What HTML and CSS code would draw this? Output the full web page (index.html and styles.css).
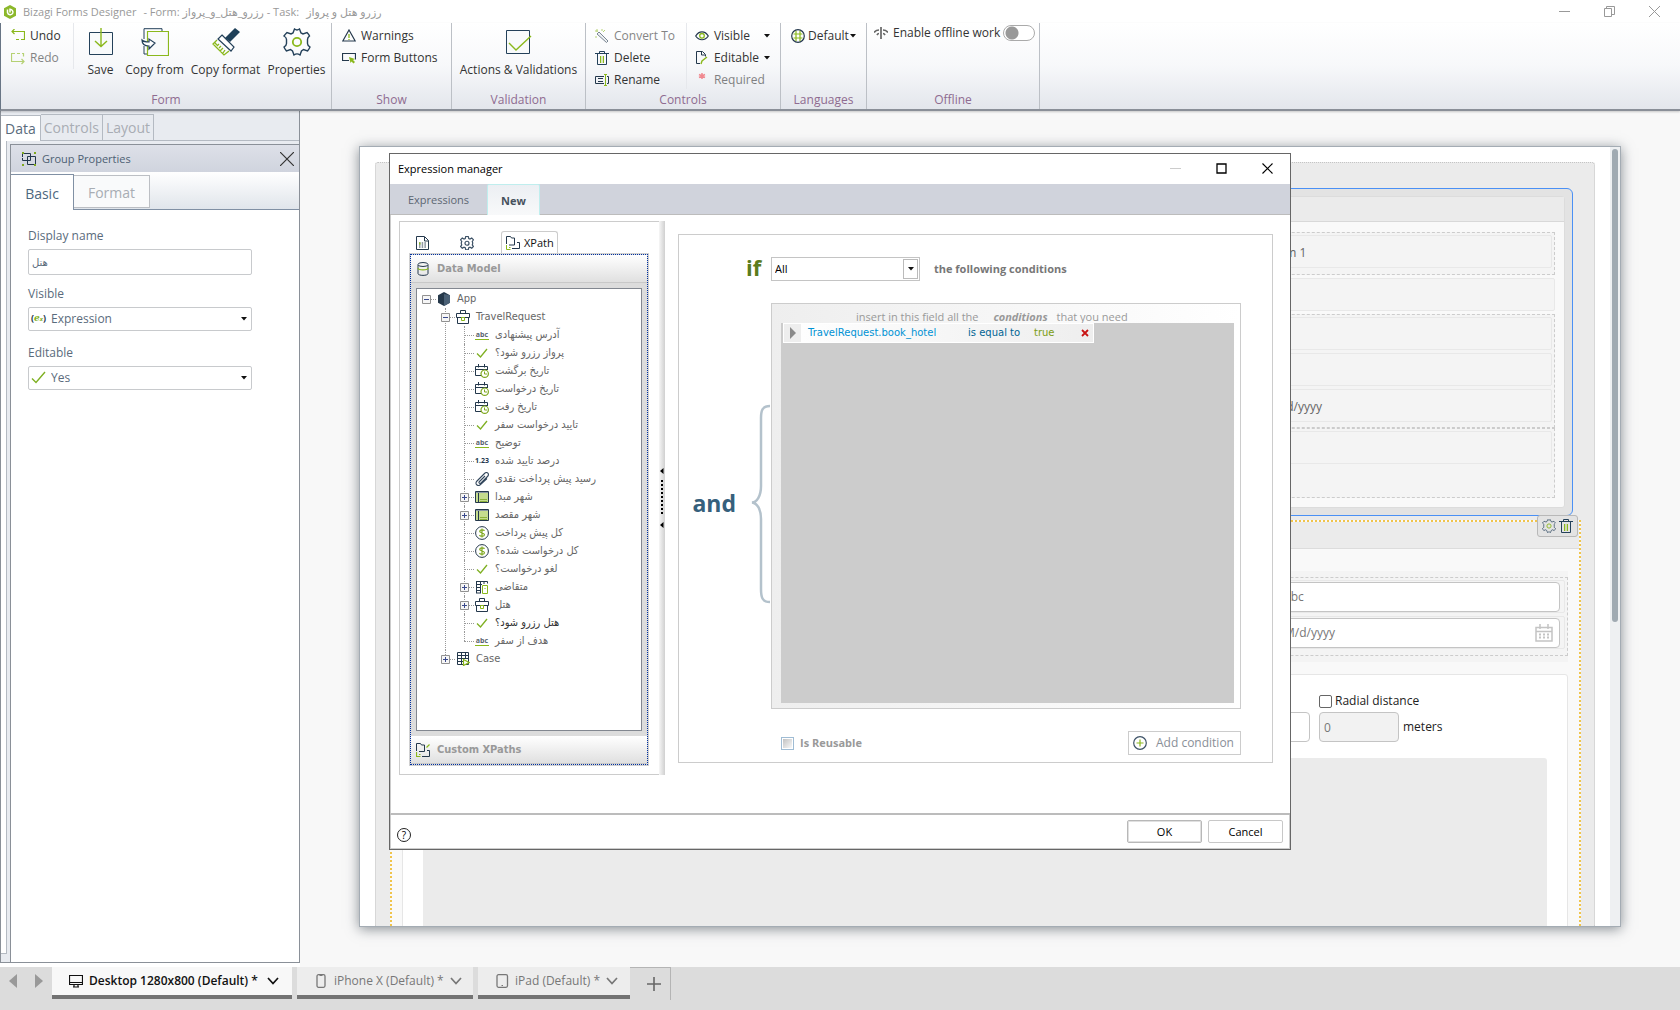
FILE: index.html
```html
<!DOCTYPE html>
<html lang="en">
<head>
<meta charset="utf-8">
<title>Bizagi Forms Designer</title>
<link rel="stylesheet" href="styles.css">
</head>
<body>
<svg class="sprite" aria-hidden="true">
  <symbol id="gear" viewBox="0 0 28 28"><path d="M11.500 1c2 1.500 3 1.500 5 0l1.500 4 2 1 4-1.500c0 0 2 2 2.500 3.500-2 1.500-2 2.500-2 3.500v4c0 1 0 2 2.500 3.500-.5 1.500-2.500 4-2.500 4l-4-1.500-2 1.500-1.500 4c-2-1.500-4-1.500-6 0l-1.500-4-2-1.500-4 1.500s-2-2.500-2.500-4c2.500-1.500 2.500-2.500 2.500-3.500v-4c0-1 0-2-2.500-3.500C2 6.500 4 4.500 4 4.500L8 6l2-1z" fill="none" stroke="#24415a" stroke-width="1.400"/><circle cx="14" cy="14" r="4.200" fill="none" stroke="#8ab81c" stroke-width="1.800"/></symbol>
  <symbol id="gear-dark" viewBox="0 0 28 28"><path d="M11.500 1h5l1 4 2.500 1.200L23.500 4 27 7.500l-2.500 3.500.8 2v3l-.8 2 2.500 3-3.500 3.500-3.500-2-2.500 1-1 4h-5l-1-4-2.500-1-3.500 2L1 21l2.500-3-.8-2v-3l.8-2L1 7.500 4.500 4 8 6.200 10.500 5z" fill="none" stroke="#3d5266" stroke-width="2.400"/><circle cx="14" cy="14.500" r="4" fill="none" stroke="#3d5266" stroke-width="2.400"/></symbol>
  <symbol id="trash" viewBox="0 0 14 14"><path d="M0 2.500h14M4.500 2V.5h5V2M2.500 3v10.500h9V3" fill="none" stroke="#24415a"/><path d="M5.500 5v7M8.500 5v7" stroke="#8ab81c"/><path d="M7 5v7" stroke="#8ab81c" opacity=".5"/></symbol>
  <symbol id="check" viewBox="0 0 14 14"><path d="M2 7.500l3.500 3.500L12 3" fill="none" stroke="#7fb022" stroke-width="1.300"/></symbol>
  <symbol id="date" viewBox="0 0 14 14"><path d="M6 11.500H.5v-9h12v3M1 5.500h12M3.500 0v3.500M9.500 0v3.500" fill="none" stroke="#24384c"/><circle cx="9.700" cy="9.700" r="3.700" fill="#fff" stroke="#7fa81f" stroke-width="1.200"/><path d="M9.500 7.500V10H12" fill="none" stroke="#7fa81f"/></symbol>
  <symbol id="clip" viewBox="0 0 14 14"><path d="M10 4L4.500 9.500c-1.300 1.300.2 2.800 1.500 1.500L12.500 4.500C15 2 12 -.8 9.500 1.500L2 9c-2.800 2.800.8 6 3.500 3.500L12 6.500" fill="none" stroke="#33475c" stroke-width="1.100"/></symbol>
  <symbol id="param" viewBox="0 0 14 14"><path d="M.5 1.500h13v11H.5z" fill="#c5dc8e" stroke="#24384c"/><path d="M1 2.500h12" stroke="#8b98a3"/><path d="M3.500 3v9" stroke="#24384c"/><path d="M5 9.500h7M5 11.500h7" stroke="#8cb13b"/></symbol>
  <symbol id="money" viewBox="0 0 14 14"><circle cx="7" cy="7" r="6.400" fill="none" stroke="#24384c"/><path d="M9.500 4.800C9 3.500 5 3.300 4.700 5.200 4.500 7 9.500 6.500 9.500 8.800 9.400 10.800 5 10.700 4.500 9M7 2.500v9" fill="none" stroke="#7fa81f" stroke-width="1.200"/></symbol>
  <symbol id="case-bag" viewBox="0 0 14 14"><path d="M.5 3.500h13v4H.5zM1.500 7.500v6h11v-6M4.500 3V.5h5V3" fill="#fff" stroke="#24384c"/><path d="M5.500 7.500h3v3h-3z" fill="#fff" stroke="#8ab81c"/></symbol>
  <symbol id="user-tbl" viewBox="0 0 14 14"><path d="M1.500 1v12M1 1.500h11.500v2M1 4.500h6M1 7.500h5M1 10.500h5M1 13h5M5.500 1v12M9 1v3" fill="none" stroke="#24384c"/><path d="M7.500 5.500h5v8h-5zM10 8v1" fill="#fff" stroke="#8ab81c"/></symbol>
  <symbol id="case-tbl" viewBox="0 0 14 14"><path d="M1.500.5h11v12h-11zM1 3.500h11M1 6.500h11M1 9.500h6M5.500 1v11M9.500 1v6" fill="none" stroke="#24384c"/><path d="M7.500 7.500l5.500 3-5.500 3z" fill="#fff" stroke="#8ab81c" stroke-width="1.200"/></symbol>
  <symbol id="cube" viewBox="0 0 14 14"><path d="M7 0l6 3.300v7.400L7 14l-6-3.300V3.300z" fill="#25384a"/><path d="M7 2l6 1.300v7.400L7 14z" fill="#4a6075"/></symbol>
  <symbol id="xpath" viewBox="0 0 14 14"><path d="M.5 8V.5h4l1 1.500h3v7H3M6 12.500h7.500v-6H11" fill="none" stroke="#24384c"/><path d="M.5 9v4.500h4M3 11.500h1.500" fill="none" stroke="#8ab81c"/></symbol>
  <symbol id="plus-box" viewBox="0 0 9 9"><path d="M.5.5h8v8h-8z" fill="#f6f6f6" stroke="#919191"/><path d="M2 4.500h5M4.500 2v5" stroke="#3a4a8c"/></symbol>
  <symbol id="minus-box" viewBox="0 0 9 9"><path d="M.5.5h8v8h-8z" fill="#f6f6f6" stroke="#919191"/><path d="M2 4.500h5" stroke="#3a4a8c"/></symbol>
  <symbol id="chev" viewBox="0 0 12 8"><path d="M1 1l5 5.500L11 1" fill="none" stroke="currentColor" stroke-width="1.700"/></symbol>
  <symbol id="caret" viewBox="0 0 6 4"><path d="M0 0h6L3 3.500z" fill="#111"/></symbol>
</svg>

<header class="titlebar">
  <svg class="logo" viewBox="0 0 14 14"><path d="M7 0l6 3.300v7.400L7 14l-6-3.300V3.300z" fill="#8cb82b"/><path d="M4.500 4.500v3A2.800 2.800 0 0 0 9.800 8 3 3 0 0 0 7 4.200V7.500" fill="none" stroke="#fff" stroke-width="1.500"/></svg>
  <h1 class="app-title"><span>Bizagi Forms Designer</span><span>- Form: رزرو_هتل_و_پرواز - Task:</span><span>رزرو هتل و پرواز</span></h1>
  <div class="win-buttons">
    <button aria-label="Minimize"><svg viewBox="0 0 11 11"><path d="M0 5.500h11" stroke="#999"/></svg></button>
    <button aria-label="Restore"><svg viewBox="0 0 11 11"><path d="M.5 2.500h7v8h-7zM2.500 2V.5h8v8H8" fill="none" stroke="#999"/></svg></button>
    <button aria-label="Close"><svg viewBox="0 0 11 11"><path d="M0 0l11 11M11 0L0 11" stroke="#999"/></svg></button>
  </div>
</header>

<nav class="ribbon" aria-label="Ribbon">
  <section class="group g-form">
    <div class="group-body">
      <div class="stack undo">
        <button class="small"><svg viewBox="0 0 14 14"><path d="M3.500 0L1 2.500 3.500 5M1 2.500h12.500v8H10M8 10.500H5" fill="none" stroke="#8ab81c" stroke-width="1.200"/></svg>Undo</button>
        <button class="small off"><svg viewBox="0 0 14 14"><path d="M4 2.500H.5v8H13M10.500 8l2.500 2.500-2.500 2.500M6 2.500h3M11 2.500h1.500v3" fill="none" stroke="#8ab81c" stroke-width="1.200"/></svg>Redo</button>
      </div>
      <button class="big save"><svg viewBox="0 0 28 28"><path d="M2.500 4.500h23v22h-23z" fill="#f8fafb" stroke="#24415a"/><path d="M14 0v18M8 13l6 5.500 6-5.500" fill="none" stroke="#8ab81c" stroke-width="1.400"/></svg>Save</button>
      <button class="big from"><svg viewBox="0 0 28 28"><path d="M3 11V.7h18V4M3 18v8h3" fill="none" stroke="#24415a"/><path d="M6.500 3.500h21v24h-21z" fill="#f8fafb" stroke="#8ab81c" stroke-width="1.200"/><path d="M1 12c0 4 2 6 7 6v3l6-6-6-4v3c-3 0-5 0-7-2z" fill="#fff" stroke="#24415a" stroke-width="1.200"/></svg>Copy from</button>
      <button class="big format"><svg viewBox="0 0 28 28"><path d="M23 0l5 4-10 10-5-4z" fill="#1f4059"/><path d="M10 7l12 12-3 4L6 11z" fill="#fff" stroke="#24415a" stroke-width="1.200"/><path d="M5 12L1 16l11 11 5-4M3 15l2 2M5 18l2-2M7 20l2-2M8 23l3-3M11 25l2-3" fill="none" stroke="#8ab81c" stroke-width="1.300"/></svg>Copy format</button>
      <button class="big from"><svg><use href="#gear"/></svg>Properties</button>
    </div>
    <h2>Form</h2>
  </section>
  <section class="group g-show">
    <div class="group-body">
      <div class="stack">
        <button class="small"><svg viewBox="0 0 14 14"><path d="M7 1l6.200 11H.8z" fill="none" stroke="#24384c" stroke-width="1.200"/><path d="M7 5v4M7 10v1" stroke="#8ab81c" stroke-width="1.300"/></svg>Warnings</button>
        <button class="small"><svg viewBox="0 0 14 14"><path d="M7 9.500H.5v-7h13v6" fill="none" stroke="#24384c" stroke-width="1.200"/><path d="M7 6l6 2-2 1 2 2-1.500 1.500-2-2-1 1.500z" fill="#8ab81c"/></svg>Form Buttons</button>
      </div>
    </div>
    <h2>Show</h2>
  </section>
  <section class="group g-valid">
    <div class="group-body">
      <button class="big"><svg viewBox="0 0 28 28"><path d="M2.500 2.500h23v23h-23z" fill="#f8fafb" stroke="#24415a"/><path d="M5 15l7 7L27 8" fill="none" stroke="#8ab81c" stroke-width="1.400"/></svg>Actions &amp; Validations</button>
    </div>
    <h2>Validation</h2>
  </section>
  <section class="group g-controls">
    <div class="group-body">
      <div class="stack first">
        <button class="small off"><svg viewBox="0 0 14 14"><path d="M4 3l9 9-1.500 1.500L2 5z" fill="#e5e9ec" stroke="#24384c"/><path d="M2 0v3M0 2h3M7 0v2M8 3l2-2M1 7v2" stroke="#8ab81c"/></svg>Convert To</button>
        <button class="small"><svg><use href="#trash"/></svg>Delete</button>
        <button class="small"><svg viewBox="0 0 14 14"><path d="M9 3.500H.5v7H9M12 3.500h1.500v7H12M3 5.500h5M3 8.500h5" fill="none" stroke="#24384c"/><path d="M9 1.500h3M10.500 2v10M9 12.500h3" stroke="#8ab81c" fill="none"/></svg>Rename</button>
      </div>
      <div class="stack second">
        <button class="small"><svg viewBox="0 0 14 14"><path d="M.7 7C4 1.500 10 1.500 13.300 7 10 12 4 12 .7 7z" fill="none" stroke="#24384c" stroke-width="1.200"/><circle cx="7" cy="6.800" r="2.300" fill="none" stroke="#8ab81c" stroke-width="1.300"/></svg>Visible<svg class="caret"><use href="#caret"/></svg></button>
        <button class="small"><svg viewBox="0 0 14 14"><path d="M5 12.500H1.500V.5h6l3 3v2M6.500 1v3h3.500" fill="none" stroke="#24384c"/><path d="M6 13l1-3 5-4" fill="none" stroke="#8ab81c" stroke-width="1.400"/></svg>Editable<svg class="caret"><use href="#caret"/></svg></button>
        <button class="small off"><svg viewBox="0 0 14 14"><path d="M7 0v6M4 1.500l6 3M10 1.500l-6 3" stroke="#f0424b" stroke-width="1.500"/></svg>Required</button>
      </div>
    </div>
    <h2>Controls</h2>
  </section>
  <section class="group g-lang">
    <div class="group-body">
      <div class="stack">
        <button class="small"><svg viewBox="0 0 14 14"><circle cx="7" cy="7" r="6.300" fill="none" stroke="#24384c" stroke-width="1.200"/><path d="M5 2v10M9 2v10M2.500 5h9M2.500 9h9" stroke="#8ab81c" stroke-width="1.200"/></svg>Default<svg class="caret"><use href="#caret"/></svg></button>
      </div>
    </div>
    <h2>Languages</h2>
  </section>
  <section class="group g-off">
    <div class="group-body">
      <svg class="ico14" viewBox="0 0 14 14"><path d="M7 1v12M0 6.500c1.500-2 3-2.500 5-2.500M9 4c2 0 3.500.5 5 2.500M3 9c.5-1 1-1.500 2-1.500M9 7.500c1 0 1.500.5 2 1.500" fill="none" stroke="#666" stroke-width="1.700"/></svg>
      <label for="offline">Enable offline work</label>
      <input type="checkbox" id="offline" class="toggle">
    </div>
    <h2>Offline</h2>
  </section>
</nav>

<main class="workspace">
  <aside class="side">
    <div class="side-tabs">
      <button class="on">Data</button><button>Controls</button><button>Layout</button>
    </div>
    <div class="side-row">
      <div class="strip"></div>
      <section class="props">
        <header class="props-head">
          <svg class="ico14" viewBox="0 0 14 14"><path d="M.5 5V1.500h8v7h-8V6M5.500 4.500h8v8h-8z" fill="none" stroke="#24384c"/><path d="M0 0h2v2H0zM12 0h2v2h-2zM0 12h2v2H0zM12 12h2v2h-2z" fill="#7fa81f"/></svg>
          <h2>Group Properties</h2>
          <button aria-label="Close panel"><svg viewBox="0 0 14 14"><path d="M0 0l14 14M14 0L0 14" stroke="#333" stroke-width="1.200"/></svg></button>
        </header>
        <div class="props-tabs"><button class="on">Basic</button><button>Format</button></div>
        <form class="props-form">
          <label for="dname">Display name</label>
          <input id="dname" type="text" value="هتل">
          <label for="vis">Visible</label>
          <div class="pick"><span class="ex">(<b>e</b><i>x</i>)</span><select id="vis"><option>Expression</option></select><svg class="caret"><use href="#caret"/></svg></div>
          <label for="edi">Editable</label>
          <div class="pick"><svg class="tick" viewBox="0 0 15 15"><path d="M1 8.500L5 12.500 14 2" fill="none" stroke="#7fb022" stroke-width="1.400"/></svg><select id="edi"><option>Yes</option></select><svg class="caret"><use href="#caret"/></svg></div>
        </form>
      </section>
    </div>
  </aside>

  <section class="canvas">
    <div class="sheet">
      <div class="form-area">
        <section class="grp blue">
          <div class="inner">
            <div class="inner-head"></div>
            <div class="inner-body">
              <div class="dash"><div class="cell"><span>Item 1</span></div></div>
              <div class="cell wide"></div>
              <div class="dash many"><div class="cell"></div><div class="cell"></div><div class="cell"><span>M/d/yyyy</span></div></div>
              <div class="dash last"><div class="cell"></div></div>
            </div>
          </div>
        </section>
        <section class="grp yellow">
          <div class="badge"><button aria-label="Settings"><svg><use href="#gear"/></svg></button><button aria-label="Delete group"><svg><use href="#trash"/></svg></button></div>
          <div class="y-head"></div>
          <div class="y-body">
            <div class="band">
              <div class="dash2">
                <div class="cell"><input type="text" value="abc" aria-label="Hotel"></div>
                <div class="cell"><input type="text" value="M/d/yyyy" aria-label="Date"><svg class="cal" viewBox="0 0 18 18"><path d="M1 3.500h16v13.500H1zM1 7.500h16M5 0v5M13 0v5" fill="none" stroke="#c4c4c4" stroke-width="1.500"/><path d="M4 10.500h10M4 13.500h10" stroke="#c4c4c4" stroke-width="2" stroke-dasharray="2 2"/></svg></div>
              </div>
            </div>
            <div class="map-card">
              <div class="radial">
                <input class="near" type="text" aria-label="Address">
                <div class="radial-col">
                  <span class="radial-row"><input type="checkbox" id="rad"><label for="rad">Radial distance</label></span>
                  <span class="radial-row"><input class="dist" id="dist" type="text" value="0"><label for="dist">meters</label></span>
                </div>
              </div>
              <div class="map"></div>
            </div>
          </div>
        </section>
      </div>
      <div class="track"><div class="thumb"></div></div>
    </div>
  </section>
</main>

<footer class="devices">
  <svg class="nav" viewBox="0 0 8 14"><path d="M8 0v14L0 7z" fill="#999"/></svg>
  <svg class="nav" viewBox="0 0 8 14"><path d="M0 0v14l8-7z" fill="#999"/></svg>
  <button class="dev on d1"><svg class="ico14" viewBox="0 0 14 14"><path d="M.5 1.500h13v9H.5zM1 8.500h12M5 11v2h4v-2M4 13h6" fill="none" stroke="currentColor" stroke-width="1.200"/></svg><span>Desktop 1280x800 (Default) *</span><svg class="chev"><use href="#chev"/></svg></button>
  <button class="dev d2"><svg class="ico14" viewBox="0 0 14 14"><rect x="3" y=".7" width="8" height="12.600" rx="1.500" fill="none" stroke="currentColor" stroke-width="1.300"/><path d="M5.500 1.500h3" stroke="currentColor"/></svg><span>iPhone X (Default) *</span><svg class="chev"><use href="#chev"/></svg></button>
  <button class="dev d3"><svg class="ico14" viewBox="0 0 14 14"><rect x="2" y=".7" width="10.500" height="12.600" rx="1.500" fill="none" stroke="currentColor" stroke-width="1.300"/><path d="M6.500 11.500h1.500" stroke="currentColor"/></svg><span>iPad (Default) *</span><svg class="chev"><use href="#chev"/></svg></button>
  <button class="add" aria-label="Add device"><svg class="ico14" viewBox="0 0 14 14"><path d="M7 0v14M0 7h14" stroke="#666" stroke-width="1.600"/></svg></button>
</footer>

<section class="dialog" role="dialog" aria-label="Expression manager">
  <header class="dlg-title">
    <h2>Expression manager</h2>
    <button aria-label="Minimize"><svg viewBox="0 0 11 11"><path d="M0 5.500h11" stroke="#ccc"/></svg></button>
    <button aria-label="Maximize"><svg viewBox="0 0 11 11"><path d="M1 1h9v9H1z" fill="none" stroke="#000" stroke-width="1.300"/></svg></button>
    <button aria-label="Close"><svg viewBox="0 0 11 11"><path d="M.5.5l10 10M10.500.5l-10 10" stroke="#000" stroke-width="1.100"/></svg></button>
  </header>
  <div class="dlg-tabs"><button>Expressions</button><button class="on">New</button></div>
  <div class="dlg-body">
    <div class="left-box">
      <div class="icon-tabs">
        <button aria-label="Functions"><svg class="ico14" viewBox="0 0 14 14"><path d="M1.500.5h8l4 4v9h-12zM9.500 1v4h4" fill="none" stroke="#24384c"/><path d="M4 7h8M4 9h8M4 11h8" stroke="#24384c" stroke-dasharray="1.500 1.200"/><path d="M4 6.500h1.500v2H4z" fill="#8ab81c"/></svg></button>
        <button aria-label="Settings"><svg class="ico14"><use href="#gear-dark"/></svg></button>
        <button class="on"><svg class="ico14"><use href="#xpath"/></svg>XPath</button>
      </div>
      <div class="accordion">
        <button class="acc-head"><svg class="ico14" viewBox="0 0 14 14"><path d="M2 3v8.500c0 2.500 10 2.500 10 0V3" fill="none" stroke="#24384c"/><ellipse cx="7" cy="2.500" rx="5" ry="2" fill="none" stroke="#24384c"/><path d="M2 6c0 2.500 10 2.500 10 0" fill="none" stroke="#8ab81c" stroke-width="1.200"/></svg>Data Model</button>
        <div class="tree">
          <ul class="root">
            <li><div class="node"><button aria-label="Collapse"><svg><use href="#minus-box"/></svg></button><svg class="ico14"><use href="#cube"/></svg>App</div>
              <ul>
                <li><div class="node"><button aria-label="Collapse"><svg><use href="#minus-box"/></svg></button><svg class="ico14"><use href="#case-bag"/></svg>TravelRequest</div>
                  <ul>
                    <li><div class="node leaf"><span class="abc">abc</span>آدرس پیشنهادی</div></li>
                    <li><div class="node leaf"><svg class="ico14"><use href="#check"/></svg>پرواز رزرو شود؟</div></li>
                    <li><div class="node leaf"><svg class="ico14"><use href="#date"/></svg>تاریخ برگشت</div></li>
                    <li><div class="node leaf"><svg class="ico14"><use href="#date"/></svg>تاریخ درخواست</div></li>
                    <li><div class="node leaf"><svg class="ico14"><use href="#date"/></svg>تاریخ رفت</div></li>
                    <li><div class="node leaf"><svg class="ico14"><use href="#check"/></svg>تایید درخواست سفر</div></li>
                    <li><div class="node leaf"><span class="abc">abc</span>توضیح</div></li>
                    <li><div class="node leaf"><span class="abc num">1.23</span>درصد تایید شده</div></li>
                    <li><div class="node leaf"><svg class="ico14"><use href="#clip"/></svg>رسید پیش پرداخت نقدی</div></li>
                    <li><div class="node"><button aria-label="Expand"><svg><use href="#plus-box"/></svg></button><svg class="ico14"><use href="#param"/></svg>شهر مبدا</div></li>
                    <li><div class="node"><button aria-label="Expand"><svg><use href="#plus-box"/></svg></button><svg class="ico14"><use href="#param"/></svg>شهر مقصد</div></li>
                    <li><div class="node leaf"><svg class="ico14"><use href="#money"/></svg>کل پیش پرداخت</div></li>
                    <li><div class="node leaf"><svg class="ico14"><use href="#money"/></svg>کل درخواست شده؟</div></li>
                    <li><div class="node leaf"><svg class="ico14"><use href="#check"/></svg>لغو درخواست؟</div></li>
                    <li><div class="node"><button aria-label="Expand"><svg><use href="#plus-box"/></svg></button><svg class="ico14"><use href="#user-tbl"/></svg>متقاضی</div></li>
                    <li><div class="node"><button aria-label="Expand"><svg><use href="#plus-box"/></svg></button><svg class="ico14"><use href="#case-bag"/></svg>هتل</div></li>
                    <li><div class="node leaf picked"><svg class="ico14"><use href="#check"/></svg>هتل رزرو شود؟</div></li>
                    <li><div class="node leaf"><span class="abc">abc</span>هدف از سفر</div></li>
                  </ul>
                </li>
                <li><div class="node"><button aria-label="Expand"><svg><use href="#plus-box"/></svg></button><svg class="ico14"><use href="#case-tbl"/></svg>Case</div></li>
              </ul>
            </li>
          </ul>
        </div>
        <button class="acc-head"><svg class="ico14" viewBox="0 0 14 14"><path d="M.5 8V.5h4l1 1.500h3v6.500H3M6 13.500h7.500v-6H11" fill="none" stroke="#24384c"/><path d="M.5 9v4.500h4M3 11.500h1.500M10.500 4.500l3-3" fill="none" stroke="#8ab81c" stroke-width="1.200"/></svg>Custom XPaths</button>
      </div>
    </div>
    <div class="splitter"><svg viewBox="0 0 6 60"><path d="M4.500 0v6L1 3zM4.500 54v6L1 57z" fill="#000"/><path d="M3 12v36" stroke="#000" stroke-width="2" stroke-dasharray="2 2"/></svg></div>
    <div class="rule">
      <div class="if-row">
        <span class="if">if</span>
        <div class="match"><select aria-label="Match"><option>All</option></select><span class="arrow"><svg class="caret"><use href="#caret"/></svg></span></div>
        <strong>the following conditions</strong>
      </div>
      <div class="and">
        <span>and</span>
        <svg viewBox="0 0 20 200"><path d="M20 2C12 2 11 7 11 14V82c0 10-4 16-9 16.500 5 .5 9 6.500 9 16.500v70c0 8 1 13 9 13" fill="none" stroke="#b4c2cc" stroke-width="2.500"/></svg>
      </div>
      <div class="conds">
        <p>insert in this field all the <b>conditions</b> that you need</p>
        <div class="cond-list">
          <div class="cond">
            <span class="play"><svg viewBox="0 0 6 12"><path d="M0 0v12l6-6z" fill="#8a8a8a"/></svg></span>
            <a href="#field">TravelRequest.book_hotel</a><a class="op" href="#op">is equal to</a><a class="val" href="#val">true</a>
            <button aria-label="Remove"><svg viewBox="0 0 8 8"><path d="M1 1l6 6M7 1L1 7" stroke="#c81414" stroke-width="1.800"/></svg></button>
          </div>
        </div>
      </div>
      <div class="rule-foot">
        <input type="checkbox" id="reuse"><label for="reuse">Is Reusable</label>
        <button class="add-cond"><svg class="ico14" viewBox="0 0 14 14"><circle cx="7" cy="7" r="6.300" fill="none" stroke="#3d5266" stroke-width="1.200"/><path d="M7 3.500v7M3.500 7h7" stroke="#8ab81c" stroke-width="1.200"/></svg>Add condition</button>
      </div>
    </div>
  </div>
  <footer class="dlg-foot">
    <button class="help" aria-label="Help">?</button>
    <button class="ok">OK</button><button>Cancel</button>
  </footer>
</section>
</body>
</html>
```
FILE: styles.css
```css
* { box-sizing: border-box; }
body {
  margin: 0; height: 100vh; display: flex; flex-direction: column; overflow: hidden; position: relative;
  font: 12px/16px "Open Sans", "DejaVu Sans", sans-serif; color: #333; background: #fff;
}
h1, h2, p, ul { margin: 0; padding: 0; font: inherit; list-style: none; }
button, input, select { font: inherit; color: inherit; background: none; border: 0; padding: 0; margin: 0; border-radius: 0; }
select { appearance: none; }
svg { display: block; flex: none; }
.sprite { position: absolute; width: 0; height: 0; }
.ico14 { width: 14px; height: 14px; }
.caret { width: 6px; height: 4px; }

/* title bar */
.titlebar { height: 23px; display: flex; align-items: center; padding-left: 3px; flex: none; color: #999; }
.logo { width: 14px; height: 14px; margin-right: 6px; }
.app-title { flex: 1; display: flex; gap: 7px; font-size: 11px; }
.win-buttons { display: flex; padding-right: 3px; }
.win-buttons button { width: 45px; height: 20px; display: grid; place-items: center; }
.win-buttons svg { width: 11px; height: 11px; }

/* ribbon */
.ribbon { height: 88px; flex: none; display: flex; border-left: 1px solid #687585; border-bottom: 2px solid #8a8f98; background: linear-gradient(#fff, #f7f8fa 50%, #e3e6ec); box-shadow: 0 1px 2px rgba(0, 0, 0, .2); position: relative; }
.group { display: flex; flex-direction: column; border-right: 1px solid #bcc0c6; }
.group h2 { text-align: center; color: #8f6b90; height: 17px; flex: none; }
.group-body { flex: 1; display: flex; align-items: flex-start; min-height: 0; }
.g-form { width: 331px; }
.g-show { width: 120px; }
.g-valid { width: 134px; }
.g-controls { width: 195px; }
.g-lang { width: 86px; }
.g-off { width: 173px; }
.stack { display: flex; flex-direction: column; gap: 6px; padding: 5px 0 0 10px; }
.small { height: 16px; display: flex; align-items: center; gap: 5px; white-space: nowrap; }
.small svg:not(.caret) { width: 14px; height: 14px; }
.off { opacity: .6; }
.undo { width: 73px; height: 46px; border-right: 1px solid #e6e8ec; flex: none; }
.big { display: flex; flex-direction: column; align-items: center; gap: 6px; padding-top: 5px; white-space: nowrap; flex: none; }
.big svg { width: 28px; height: 28px; }
.save { width: 53px; }
.from { width: 55px; }
.format { width: 87px; }
.g-valid .group-body { justify-content: center; }
.stack.first { width: 101px; border-right: 1px solid #e6e8ec; height: 66px; padding-left: 9px; }
.stack.second { flex: 1; padding-left: 8px; }
.second .caret { margin-left: auto; }
.second .small { padding-right: 10px; }
.g-lang .small { gap: 3px; }
.g-lang .caret { margin-left: -2px; }
.g-off .group-body { padding: 1px 0 0 7px; gap: 5px; align-items: center; flex: none; height: 18px; white-space: nowrap; }
.g-off h2 { margin-top: auto; }
.toggle { appearance: none; width: 32px; height: 16px; flex: none; border: 1px solid #aaa; border-radius: 8px; background: radial-gradient(circle at 8px 7px, #999 6px, #fff 7px); }
.g-off label { margin-right: -2px; }

/* workspace */
.workspace { flex: 1; display: flex; min-height: 0; }
.side { width: 300px; flex: none; display: flex; flex-direction: column; border: 1px solid #8a9098; border-top: 0; background: #e8ebf0; margin-bottom: 4px; }
.side-tabs { display: flex; align-items: flex-end; height: 30px; border-bottom: 1px solid #b4bac2; padding-top: 4px; font-size: 14px; color: #a8adb4; }
.side-tabs button { height: 26px; padding: 0 3px; border: 1px solid #b4bac2; border-left: 0; border-bottom: 0; }
.side-tabs .on { background: #fff; color: #5a6b7c; padding: 1px 4px 0; margin-bottom: -1px; }
.side-row { flex: 1; display: flex; }
.strip { width: 6px; margin-right: 3px; margin-bottom: 8px; background: #fff; border: 1px solid #b4bac2; border-left: 0; border-top: 0; }
.props { flex: 1; margin-top: 3px; background: #fff; border: 1px solid #8a9098; border-right: 0; border-bottom: 0; display: flex; flex-direction: column; }
.props-head { height: 27px; display: flex; align-items: center; gap: 6px; padding: 0 5px 0 11px; background: linear-gradient(#dde0e8, #d0d4de); color: #4d5f73; }
.props-head h2 { flex: 1; font-size: 11px; }
.props-head button svg { width: 14px; height: 14px; }
.props-tabs { height: 38px; display: flex; align-items: flex-end; font-size: 14px; color: #a8adb4; background: linear-gradient(#fff, #e0e5eb); border-bottom: 1px solid #8090a4; }
.props-tabs button { height: 33px; width: 76px; padding-top: 3px; border: 1px solid #bcbfc4; border-left: 0; background: #f9fafb; margin-bottom: 1px; }
.props-tabs .on { width: 63px; height: 36px; background: #fff; color: #4d6780; border: 1px solid #8090a4; border-left: 0; border-bottom: 0; margin-bottom: -1px; }
.props-form { padding: 18px 47px 0 17px; display: flex; flex-direction: column; color: #5a6b7c; }
.props-form label { margin-bottom: 5px; }
.props-form input { height: 26px; padding: 0 3px; border: 1px solid #c8cacd; border-radius: 2px; margin-bottom: 11px; font-size: 10px; background: #fff; }
.pick { position: relative; margin-bottom: 14px; }
.pick select { width: 100%; height: 24px; padding: 0 0 0 22px; border: 1px solid #c8cacd; border-radius: 2px; background: #fff; }
.pick .caret { position: absolute; right: 5px; top: 10px; }
.pick .tick { position: absolute; left: 3px; top: 4px; width: 15px; height: 15px; }
.ex { position: absolute; left: 3px; top: 3px; font-size: 9px; color: #24384c; font-weight: bold; }
.ex b { font-family: "DejaVu Serif", serif; font-style: italic; color: #7fb022; }
.ex i { font-size: 6px; color: #7fb022; }

/* form canvas */
.canvas { flex: 1; display: flex; padding: 35px 59px 40px; background: #f8f8f8; }
.sheet { flex: 1; display: flex; min-width: 0; background: #fff; border: 1px solid #a4acb4; box-shadow: 0 2px 12px rgba(60, 70, 80, .6); overflow: hidden; }
.form-area { flex: 1; margin: 15px 15px 0 15px; border: 1px dotted #c4c4c4; border-bottom: 0; border-radius: 3px 3px 0 0; background: #ebebeb; padding-top: 25px; }
.track { width: 10px; background: #eef0f2; padding: 2px; }
.thumb { width: 6px; height: 61%; border-radius: 3px; background: #a0aab2; }
.blue { margin: 0 21px; border: 1px solid #4a90f5; border-radius: 6px; background: #e3e3e3; padding: 7px 7px 7px 8px; }
.inner { border: 1px solid #dcdcdc; border-radius: 3px; background: #f9f9f9; }
.inner-head { height: 25px; background: #ebebeb; border-bottom: 1px solid #d8d8d8; }
.inner-body { padding: 10px 9px 9px; }
.dash { border: 1px dashed #ccc; background: #f4f4f4; padding: 2px; height: 43px; }
.cell { height: 33px; border: 1px solid #e8e8e8; border-radius: 2px; background: #f4f4f4; display: flex; align-items: center; justify-content: flex-end; color: #666; position: relative; }
.cell span { width: 280px; padding-top: 2px; }
.cell.wide { margin: 3px 0; }
.dash.many { height: 114px; display: flex; flex-direction: column; gap: 3px; }
.dash.last { height: 70px; }
.yellow { position: relative; margin: 4px 13px 0 14px; border: 2px dotted #f0c44c; border-bottom: 0; background: #f9f9f9; }
.y-head { height: 27px; background: #ebebeb; border-bottom: 1px solid #dcdcdc; }
.y-body { padding: 22px 11px 0 10px; }
.band { background: #f4f4f4; padding: 6px 0; }
.dash2 { border: 1px dashed #ccc; padding: 2px; display: flex; flex-direction: column; gap: 3px; height: 79px; }
.dash2 .cell { padding-right: 4px; }
.dash2 input { width: 285px; height: 30px; border: 1px solid #c4c4c4; border-radius: 4px; background: #fff; padding: 0 8px; color: #777; }
.cal { position: absolute; right: 11px; top: 7px; width: 18px; height: 18px; }
.badge { position: absolute; right: 1px; top: -7px; width: 41px; height: 22px; display: flex; align-items: center; justify-content: space-evenly; border: 1px solid #b8b8b8; border-radius: 3px; background: #e3e3e3; }
.badge svg { width: 14px; height: 14px; }
.map-card { margin-top: 12px; border: 1px solid #e6e6e6; background: #fff; height: 400px; padding: 18px 20px 0; border-radius: 3px; }
.radial { display: flex; justify-content: flex-end; align-items: flex-end; gap: 9px; color: #222; }
.radial input[type="text"] { height: 30px; border: 1px solid #c4c4c4; border-radius: 4px; padding: 0 4px; }
.near { width: 300px; }
.radial-col { width: 228px; display: flex; flex-direction: column; gap: 3px; }
.radial-row { display: flex; align-items: center; gap: 3px; }
.radial-row .dist { width: 80px; background: #f2f2f2; margin-right: 1px; color: #777; }
.radial-row [type="checkbox"] { appearance: none; width: 13px; height: 13px; border: 1px solid #666; border-radius: 2px; background: #fff; }
.map { margin-top: 16px; background: #ebebeb; height: 340px; border-radius: 3px; }

/* device bar */
.devices { height: 43px; flex: none; display: flex; align-items: flex-start; background: #dcdcdc; color: #777; }
.nav { width: 8px; height: 14px; margin: 7px 0 0 9px; }
.nav + .nav { margin: 7px 9px 0 18px; }
.dev { height: 32px; display: flex; align-items: center; gap: 6px; margin-right: 5px; border-bottom: 4px solid #737373; background: #ededed; white-space: nowrap; }
.dev.on { background: #f8f8f8; color: #111; font-weight: 600; }
.dev .chev { width: 12px; height: 8px; margin-left: auto; }
.d1 { width: 240px; padding: 0 13px 0 17px; }
.d2 { width: 176px; padding: 0 14px 0 17px; }
.d3 { width: 152px; padding: 0 14px 0 17px; margin-right: 0; }
.add { width: 41px; height: 33px; padding-left: 7px; border: 1px solid #b4b4b4; border-bottom: 0; border-left: 0; display: grid; place-items: center; }

/* expression manager */
.dialog { position: absolute; left: 389px; right: 389px; top: 153px; bottom: 160px; background: #fff; border: 1px solid #666; display: flex; flex-direction: column; }
.dlg-title { height: 30px; flex: none; display: flex; align-items: center; color: #000; }
.dlg-title h2 { flex: 1; padding-left: 8px; font-size: 11px; }
.dlg-title button { width: 46px; height: 30px; padding-bottom: 2px; display: grid; place-items: center; }
.dlg-title svg { width: 11px; height: 11px; }
.dlg-tabs { height: 31px; flex: none; display: flex; background: #d0d3dc; border-bottom: 1px solid #bcbcbc; color: #5c6672; font-size: 11px; }
.dlg-tabs button { width: 97px; padding-top: 1px; }
.dlg-tabs .on { width: 53px; height: 31px; font-weight: bold; color: #47525e; background: linear-gradient(#eceff3, #f8f9fa); border: 1px solid #bfeeee; border-bottom: 0; border-radius: 2px 2px 0 0; }
.dlg-body { flex: 1; display: flex; min-height: 0; padding: 6px 17px 38px 8px; border-left: 1px solid #ccc; border-bottom: 2px solid #bcbcbc; }
.left-box { width: 260px; flex: none; border: 1px solid #ccc; border-right: 0; padding: 9px 11px 9px 10px; display: flex; flex-direction: column; }
.icon-tabs { height: 23px; flex: none; display: flex; color: #111; font-size: 11px; }
.icon-tabs button { width: 45px; display: flex; align-items: center; padding-left: 5px; gap: 4px; }
.icon-tabs .on { width: 57px; margin-left: 1px; padding-left: 4px; border: 1px solid #ccc; border-bottom: 0; border-radius: 3px 3px 0 0; }
.accordion { flex: 1; display: flex; flex-direction: column; min-height: 0; border: 1px dotted #0030a0; outline: 1px solid #d0d0d0; background: #dcdcdc; }
.acc-head { height: 28px; flex: none; display: flex; align-items: center; gap: 7px; padding: 1px 0 0 5px; background: linear-gradient(#fff, #e0e0e0); border-bottom: 1px solid #c8c8c8; font: bold 11px/16px "DejaVu Sans Condensed", "DejaVu Sans", sans-serif; color: #999; }
.tree { flex: 1; margin: 5px; padding-top: 1px; border: 1px solid #828790; background: #fff; overflow: hidden; font: 11px/18px "DejaVu Sans Condensed", "DejaVu Sans", sans-serif; color: #666; }
.root { padding: 0 0 0 5px; }
.root ul { padding-left: 19px; }
.root li { position: relative; }
.node { height: 18px; display: flex; align-items: center; gap: 6px; position: relative; white-space: nowrap; }
.node button { width: 9px; height: 9px; position: relative; }
.node button svg { width: 9px; height: 9px; }
.node::before { content: ""; position: absolute; left: 4px; top: 9px; width: 10px; border-top: 1px dotted #999; }
.leaf { padding-left: 15px; }
.picked { color: #333; }
.abc { width: 14px; font: bold 7px/9px "Open Sans", sans-serif; color: #5a6470; text-align: center; border-bottom: 1px solid #8ab81c; }
.num { border-color: transparent; color: #24384c; }
.root ul > li::before { content: ""; position: absolute; left: 4px; top: 0; bottom: 0; border-left: 1px dotted #999; }
.root ul > li:last-child::before { bottom: auto; height: 9px; }
.splitter { width: 6px; flex: none; background: linear-gradient(90deg, #f6f6f6, #d0d0d0); display: flex; align-items: center; }
.splitter svg { width: 6px; height: 60px; }
.rule { flex: 1; margin: 13px 0 12px 13px; border: 1px solid #ccc; padding: 22px 31px 7px 0; display: grid; grid-template-columns: 92px 1fr; grid-template-rows: 24px 1fr 24px; row-gap: 22px; }
.if-row { grid-column: 1 / 3; display: flex; align-items: center; padding-left: 67px; color: #777; font-size: 11px; }
.if { width: 25px; font-size: 22px; font-weight: bold; color: #5b7c1c; padding-bottom: 4px; }
.match { width: 149px; position: relative; margin-right: 14px; }
.match select { display: block; width: 100%; height: 24px; border: 1px solid #c4c4c4; padding: 0 3px; color: #000; background: #fff; }
.arrow { position: absolute; right: 2px; top: 2px; width: 15px; height: 20px; border: 1px solid #bbb; display: grid; place-items: center; pointer-events: none; }
.and { display: flex; align-items: center; justify-content: flex-end; gap: 14px; font-size: 23px; font-weight: bold; color: #36607c; padding: 0 1px 4px 0; }
.and span { padding-bottom: 2px; }
.and svg { width: 20px; height: 200px; }
.conds { border: 1px solid #ccc; background: linear-gradient(90deg, #eee, #fff); padding: 4px 6px 5px 9px; display: flex; flex-direction: column; }
.conds p { height: 15px; padding-left: 75px; font-size: 11px; line-height: 18px; color: #999; }
.conds b { font-style: italic; margin: 0 6px 0 12px; }
.cond-list { flex: 1; background: #ccc; }
.cond { width: 311px; height: 20px; margin-left: 2px; display: flex; align-items: center; border: 1px solid #fff; font: 10px/16px "DejaVu Sans", sans-serif; background: linear-gradient(90deg, #fff, #eee); }
.cond a { text-decoration: none; color: #0092d4; width: 160px; padding-bottom: 1px; }
.cond a.op { color: #006494; width: 66px; }
.cond a.val { color: #7b9c12; width: 47px; }
.play { width: 17px; height: 18px; background: #eee; display: grid; place-items: center; margin-right: 7px; }
.play svg { width: 6px; height: 12px; }
.cond button svg { width: 8px; height: 8px; }
.rule-foot { grid-column: 2; display: flex; align-items: center; font-weight: bold; color: #999; font-size: 11px; }
.rule-foot input { appearance: none; width: 13px; height: 13px; margin: 0 6px 0 10px; border: 1px solid #9fbcd4; background: linear-gradient(135deg, #bbb, #fff); box-shadow: inset 0 0 0 1px #fff; }
.add-cond { margin-left: auto; width: 113px; height: 24px; display: flex; align-items: center; gap: 9px; padding-left: 4px; border: 1px solid #ccc; color: #8a8f98; font-weight: 400; font-size: 12px; white-space: nowrap; }
.dlg-foot { height: 34px; flex: none; display: flex; align-items: center; gap: 6px; padding: 0 6px; border: 1px solid #ccc; border-top: 0; color: #000; font-size: 11px; }
.dlg-foot button { width: 75px; height: 23px; border: 1px solid #c8c8c8; border-radius: 2px; background: #fff; }
.dlg-foot .ok { box-shadow: inset 0 0 0 1px #e0e0e0; border-color: #b8b8b8; }
.dlg-foot .help { width: 14px; height: 14px; border: 1px solid #222; border-radius: 50%; margin: 6px auto 0 0; font-size: 10px; line-height: 12px; }
```
